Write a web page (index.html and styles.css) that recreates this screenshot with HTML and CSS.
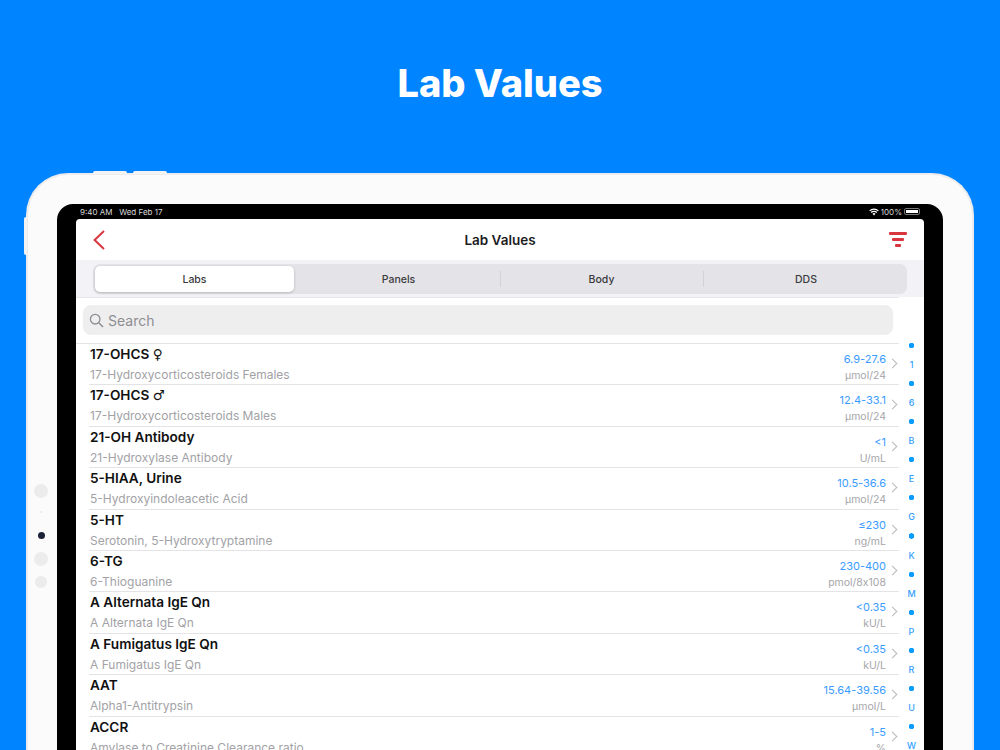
FILE: index.html
```html
<!DOCTYPE html>
<html lang="en">
<head>
    <meta charset="UTF-8">
    <title>Lab Values</title>
    <link rel="stylesheet" href="styles.css">
</head>
<body>
    <header class="page-head">
        <h1>Lab Values</h1>
    </header>

    <div class="device">
        <span class="side-btn top-one"></span>
        <span class="side-btn top-two"></span>
        <span class="side-btn left-one"></span>
        <div class="sensors">
            <span class="sensor big"></span>
            <span class="sensor tiny"></span>
            <span class="sensor lens"></span>
            <span class="sensor big"></span>
            <span class="sensor mid"></span>
        </div>

        <div class="bezel">
            <div class="status-bar">
                <span>9:40 AM&nbsp;&nbsp;&nbsp;Wed Feb 17</span>
                <div class="status-right">
                    <svg class="wifi" viewBox="0 0 16 12" width="10" height="8">
                        <path d="M8 11.5 5.6 8.9a3.4 3.4 0 0 1 4.8 0z" fill="#fff"/>
                        <path d="M3.4 6.8a6.5 6.5 0 0 1 9.2 0" fill="none" stroke="#fff" stroke-width="1.9"/>
                        <path d="M1 4.2a10 10 0 0 1 14 0" fill="none" stroke="#fff" stroke-width="1.9"/>
                    </svg>
                    <span>100%</span>
                    <span class="battery"><span class="battery-fill"></span></span>
                </div>
            </div>

            <div class="screen">
                <nav class="nav-bar">
                    <svg class="back" viewBox="0 0 12 20" width="12" height="20">
                        <path d="M11 1 1.6 10 11 19" fill="none" stroke="#d8373f" stroke-width="2"/>
                    </svg>
                    <span class="nav-title">Lab Values</span>
                    <div class="filter">
                        <span></span>
                        <span></span>
                        <span></span>
                    </div>
                </nav>

                <div class="seg-strip">
                    <div class="segments">
                        <div class="seg active">Labs</div>
                        <div class="seg">Panels</div>
                        <div class="seg divided">Body</div>
                        <div class="seg divided last">DDS</div>
                    </div>
                </div>

                <div class="content">
                    <div class="list-col">
                        <div class="search">
                            <svg viewBox="0 0 16 16" width="15" height="15">
                                <circle cx="6.6" cy="6.6" r="5.1" fill="none" stroke="#8e8e93" stroke-width="1.4"/>
                                <path d="M10.4 10.4 15 15" stroke="#8e8e93" stroke-width="1.6"/>
                            </svg>
                            <span>Search</span>
                        </div>

                        <ul class="rows">
                            <li class="row">
                                <div class="row-main">
                                    <div class="row-title">17-OHCS <span class="gender">♀</span></div>
                                    <div class="row-sub">17-Hydroxycorticosteroids Females</div>
                                </div>
                                <div class="row-range"><div class="range">6.9-27.6</div><div class="unit">µmol/24</div></div>
                                <span class="chev"></span>
                            </li>
                            <li class="row">
                                <div class="row-main">
                                    <div class="row-title">17-OHCS <span class="gender">♂</span></div>
                                    <div class="row-sub">17-Hydroxycorticosteroids Males</div>
                                </div>
                                <div class="row-range"><div class="range">12.4-33.1</div><div class="unit">µmol/24</div></div>
                                <span class="chev"></span>
                            </li>
                            <li class="row">
                                <div class="row-main">
                                    <div class="row-title">21-OH Antibody</div>
                                    <div class="row-sub">21-Hydroxylase Antibody</div>
                                </div>
                                <div class="row-range"><div class="range">&lt;1</div><div class="unit">U/mL</div></div>
                                <span class="chev"></span>
                            </li>
                            <li class="row">
                                <div class="row-main">
                                    <div class="row-title">5-HIAA, Urine</div>
                                    <div class="row-sub">5-Hydroxyindoleacetic Acid</div>
                                </div>
                                <div class="row-range"><div class="range">10.5-36.6</div><div class="unit">µmol/24</div></div>
                                <span class="chev"></span>
                            </li>
                            <li class="row">
                                <div class="row-main">
                                    <div class="row-title">5-HT</div>
                                    <div class="row-sub">Serotonin, 5-Hydroxytryptamine</div>
                                </div>
                                <div class="row-range"><div class="range">≤230</div><div class="unit">ng/mL</div></div>
                                <span class="chev"></span>
                            </li>
                            <li class="row">
                                <div class="row-main">
                                    <div class="row-title">6-TG</div>
                                    <div class="row-sub">6-Thioguanine</div>
                                </div>
                                <div class="row-range"><div class="range">230-400</div><div class="unit">pmol/8x108</div></div>
                                <span class="chev"></span>
                            </li>
                            <li class="row">
                                <div class="row-main">
                                    <div class="row-title">A Alternata IgE Qn</div>
                                    <div class="row-sub">A Alternata IgE Qn</div>
                                </div>
                                <div class="row-range"><div class="range">&lt;0.35</div><div class="unit">kU/L</div></div>
                                <span class="chev"></span>
                            </li>
                            <li class="row">
                                <div class="row-main">
                                    <div class="row-title">A Fumigatus IgE Qn</div>
                                    <div class="row-sub">A Fumigatus IgE Qn</div>
                                </div>
                                <div class="row-range"><div class="range">&lt;0.35</div><div class="unit">kU/L</div></div>
                                <span class="chev"></span>
                            </li>
                            <li class="row">
                                <div class="row-main">
                                    <div class="row-title">AAT</div>
                                    <div class="row-sub">Alpha1-Antitrypsin</div>
                                </div>
                                <div class="row-range"><div class="range">15.64-39.56</div><div class="unit">µmol/L</div></div>
                                <span class="chev"></span>
                            </li>
                            <li class="row">
                                <div class="row-main">
                                    <div class="row-title">ACCR</div>
                                    <div class="row-sub">Amylase to Creatinine Clearance ratio</div>
                                </div>
                                <div class="row-range"><div class="range">1-5</div><div class="unit">%</div></div>
                                <span class="chev"></span>
                            </li>
                        </ul>
                    </div>

                    <div class="index-col">
                        <span class="dot"></span><span class="letter">1</span>
                        <span class="dot"></span><span class="letter">6</span>
                        <span class="dot"></span><span class="letter">B</span>
                        <span class="dot"></span><span class="letter">E</span>
                        <span class="dot"></span><span class="letter">G</span>
                        <span class="dot"></span><span class="letter">K</span>
                        <span class="dot"></span><span class="letter">M</span>
                        <span class="dot"></span><span class="letter">P</span>
                        <span class="dot"></span><span class="letter">R</span>
                        <span class="dot"></span><span class="letter">U</span>
                        <span class="dot"></span><span class="letter">W</span>
                    </div>
                </div>
            </div>
        </div>
    </div>
</body>
</html>
```

FILE: styles.css
```css
* {
    margin: 0;
    padding: 0;
    box-sizing: border-box;
}

body {
    height: 750px;
    overflow: hidden;
    background: #0084ff;
    font-family: Inter, "Liberation Sans", sans-serif;
}

.page-head {
    height: 173px;
    padding-top: 61px;
    text-align: center;
}

.page-head h1 {
    color: #fff;
    font-size: 38px;
    line-height: 44px;
    font-weight: 800;
}

/* tablet frame */
.device {
    position: relative;
    width: 948px;
    height: 577px;
    margin-left: 26px;
    padding: 29px 29px 0;
    background: #fbfbfb;
    border: 2px solid #ececee;
    border-bottom: none;
    border-radius: 42px 42px 0 0;
}

.side-btn {
    position: absolute;
    background: #f3f3f4;
}

.top-one {
    top: -4px;
    left: 65px;
    width: 34px;
    height: 3px;
    border-radius: 2px 2px 0 0;
}

.top-two {
    top: -4px;
    left: 105px;
    width: 34px;
    height: 3px;
    border-radius: 2px 2px 0 0;
}

.left-one {
    top: 42px;
    left: -4px;
    width: 3px;
    height: 38px;
    border-radius: 2px 0 0 2px;
}

.sensors {
    position: absolute;
    top: 309px;
    left: 0;
    width: 26px;
    display: flex;
    flex-direction: column;
    align-items: center;
}

.sensor {
    display: block;
    border-radius: 50%;
}

.sensor.big {
    width: 14px;
    height: 14px;
    background: #ececec;
}

.sensor.tiny {
    width: 2px;
    height: 2px;
    margin-top: 13px;
    background: #e8e8e8;
}

.sensor.lens {
    width: 7px;
    height: 7px;
    margin: 19px 0 13px;
    background: #1c2238;
}

.sensor.mid {
    width: 12px;
    height: 12px;
    margin-top: 10px;
    background: #ececec;
}

.bezel {
    height: 546px;
    padding: 0 19px;
    background: #000;
    border-radius: 16px 16px 0 0;
}

.status-bar {
    height: 15px;
    display: flex;
    align-items: center;
    justify-content: space-between;
    padding: 0 4px 0 4px;
    color: #d8d8d8;
    font-size: 8px;
}

.status-right {
    display: flex;
    align-items: center;
    gap: 2px;
}

.battery {
    display: block;
    width: 16px;
    height: 7px;
    padding: 1px;
    border: 1px solid #777;
    border-radius: 2px;
}

.battery-fill {
    display: block;
    height: 100%;
    background: #fff;
}

.screen {
    height: 531px;
    background: #fff;
    border-radius: 4px 4px 0 0;
    overflow: hidden;
}

.nav-bar {
    height: 41px;
    display: flex;
    align-items: center;
    justify-content: space-between;
    padding: 0 17px;
}

.back {
    margin-right: 6px;
}

.nav-title {
    color: #1c1c1e;
    font-size: 13.5px;
    font-weight: 600;
}

.filter {
    width: 18px;
    display: flex;
    flex-direction: column;
    align-items: center;
    gap: 3px;
}

.filter span {
    display: block;
    height: 3px;
    background: #d8373f;
    border-radius: 1px;
}

.filter span:nth-child(1) {
    width: 18px;
}

.filter span:nth-child(2) {
    width: 12px;
}

.filter span:nth-child(3) {
    width: 6px;
}

.seg-strip {
    height: 37px;
    padding: 4px 17px 3px;
    background: #f2f2f7;
}

.segments {
    height: 30px;
    display: grid;
    grid-template-columns: repeat(4, 1fr);
    padding: 2px 1px;
    background: #e3e3e8;
    border-radius: 7px;
}

.seg {
    display: flex;
    align-items: center;
    justify-content: center;
    color: #3a3a3c;
    font-size: 10.5px;
    font-weight: 500;
}

.seg.active {
    margin: 0 3px 0 1px;
    background: #fff;
    border-radius: 5px;
    box-shadow: 0 1px 3px rgba(0, 0, 0, 0.2);
}

.seg.divided {
    position: relative;
}

.seg.last {
    padding-left: 3px;
}

.seg.divided::before {
    content: "";
    position: absolute;
    left: 0;
    top: 5px;
    bottom: 5px;
    width: 1px;
    background: #d2d2d7;
}

.content {
    display: flex;
}

.list-col {
    width: 823px;
    border-top: 1px solid #e6e6ea;
}

.search {
    height: 30px;
    margin: 7px 6px 8px 7px;
    display: flex;
    align-items: center;
    gap: 4px;
    padding-left: 6px;
    background: #eeeeef;
    border-radius: 8px;
    color: #8e8e93;
    font-size: 14px;
}

.rows {
    list-style: none;
    border-top: 1px solid #e4e4e6;
}

.row {
    height: 41.4px;
    display: flex;
    margin-left: 13px;
    padding-left: 1px;
    border-bottom: 1px solid #e4e4e6;
}

.row-main {
    flex: 1;
}

.row-title {
    height: 21px;
    color: #111;
    font-size: 13.6px;
    font-weight: 600;
    line-height: 21px;
}

.gender {
    font-family: "DejaVu Sans", sans-serif;
    font-weight: 400;
}

.row-sub {
    color: #a2a2a6;
    font-size: 12px;
    line-height: 19px;
}

.row-range {
    margin-right: 1px;
    text-align: right;
}

.range {
    height: 25px;
    padding-top: 7px;
    color: #3b9bff;
    font-size: 11px;
    line-height: 16px;
}

.unit {
    color: #a6a6aa;
    font-size: 10.5px;
    line-height: 14px;
    font-feature-settings: "calt" 0;
}

.chev {
    display: block;
    width: 7px;
    height: 7px;
    margin: 16px 3px 0 2px;
    border-top: 1.5px solid #b9b9bd;
    border-right: 1.5px solid #b9b9bd;
    transform: rotate(45deg);
}

.index-col {
    width: 25px;
    padding-top: 39px;
    display: flex;
    flex-direction: column;
    align-items: center;
}

.dot {
    flex: none;
    height: 19.05px;
    width: 5px;
    background: radial-gradient(circle, #0a9dff 2.5px, transparent 3px);
}

.letter {
    flex: none;
    height: 19.05px;
    color: #35a0ff;
    font-size: 9px;
    font-weight: 500;
    line-height: 19px;
}
```
